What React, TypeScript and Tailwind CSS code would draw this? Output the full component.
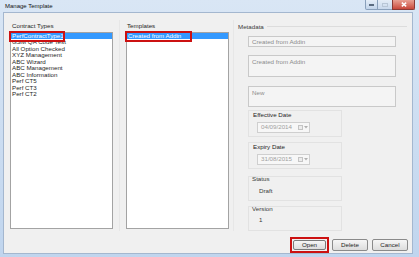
import React from 'react';

const contractTypes = [
  'PerfContractType1',
  'GSM QA Code Test',
  'All Option Checked',
  'XYZ Management',
  'ABC Wizard',
  'ABC Management',
  'ABC Information',
  'Perf CT5',
  'Perf CT3',
  'Perf CT2',
];

function DatePicker({ value }: { value: string }) {
  return (
    <div className="flex items-center h-[11px] w-[53px] border border-[#cfcfcf] bg-[#f7f7f7] pl-[3px]">
      <span className="text-[#a0a0a0] leading-none">{value}</span>
      <span className="ml-auto mr-[1px] flex items-center gap-[1px]">
        <span className="block w-[5px] h-[5px] border border-[#c4c4c4] bg-[#ececec]" />
        <svg width="4" height="3" viewBox="0 0 4 3">
          <path d="M0 0 L4 0 L2 2.5 Z" fill="#b0b0b0" />
        </svg>
      </span>
    </div>
  );
}

export default function App() {
  return (
    <div
      className="w-[419px] h-[257px] flex flex-col bg-gradient-to-b from-[#d9e6f5] to-[#c0d5ee] text-[6.2px] text-[#1e1e1e] overflow-hidden"
      style={{ fontFamily: '"Liberation Sans", Arial, sans-serif' }}
    >
      {/* Title bar */}
      <div className="relative h-[12px] flex items-center pl-[5px] shrink-0">
        <span className="text-[6px] text-[#111] leading-none">Manage Template</span>
        <div className="absolute right-[4px] top-0 flex h-[10px]">
          <div className="w-[13px] h-full border border-[#8aa0bb] border-t-0 rounded-bl-[2px] bg-gradient-to-b from-[#e4edf7] to-[#c2d4ea] flex items-center justify-center">
            <span className="block w-[5px] h-[2px] bg-white border border-[#5a6b80]" />
          </div>
          <div className="w-[14px] h-full border-b border-[#8aa0bb] bg-gradient-to-b from-[#e4edf7] to-[#c8d8ec] flex items-center justify-center">
            <span className="block w-[6px] h-[4px] border border-[#b8c6d6]" />
          </div>
          <div className="w-[23px] h-full border border-[#8a3a34] border-t-0 rounded-br-[2px] bg-gradient-to-b from-[#e8a093] to-[#c8473b] flex items-center justify-center">
            <svg width="6" height="5" viewBox="0 0 6 5">
              <path d="M0.8 0.6 L5.2 4.4 M5.2 0.6 L0.8 4.4" stroke="#ffffff" strokeWidth="1.4" />
            </svg>
          </div>
        </div>
      </div>

      {/* Body */}
      <div className="flex flex-1 pl-[3px] pr-[6px] pb-[5px]">
        <div className="flex-1 flex flex-col bg-[#f0f0f0] border border-[#a4b7cf]">
          <div className="flex h-[211px] mt-[7px] pl-[6px]">
            {/* Contract Types */}
            <div className="flex flex-col w-[103px]">
              <div className="h-[12px] leading-[11px] pl-[2px]">Contract Types</div>
              <div className="relative h-[197px] border border-[#a3a3a3] bg-white">
                {contractTypes.map((t, i) => (
                  <div
                    key={t}
                    className={
                      i === 0
                        ? 'h-[6.45px] leading-[6.45px] pl-[1px] bg-[#3399ff] text-white'
                        : 'h-[6.45px] leading-[6.45px] pl-[1px]'
                    }
                  >
                    {t}
                  </div>
                ))}
                <div className="absolute left-[-2px] top-[-2px] w-[56px] h-[11px] border-2 border-[#cc1111]" />
              </div>
            </div>

            <div className="w-[13px] flex justify-center">
              <div className="w-px h-full bg-[#e7e7e7]" />
            </div>

            {/* Templates */}
            <div className="flex flex-col w-[103px]">
              <div className="h-[12px] leading-[11px] pl-[1px]">Templates</div>
              <div className="relative h-[197px] border border-[#a3a3a3] bg-white">
                <div className="h-[6.45px] leading-[6.45px] pl-[1px] bg-[#3399ff] text-white">Created from Addin</div>
                <div className="absolute left-[-2px] top-[-2px] w-[67px] h-[11px] border-2 border-[#cc1111]" />
              </div>
            </div>

            <div className="w-[9px] flex justify-center">
              <div className="w-px h-full bg-[#e7e7e7]" />
            </div>

            {/* Metadata */}
            <div className="flex flex-col flex-1 pr-[5px]">
              <div className="h-[12px] flex items-center">
                <span className="leading-[11px] text-[#3a3a3a]">Metadata</span>
                <div className="flex-1 h-px bg-[#dcdcdc] ml-[3px]" />
              </div>
              <div className="flex flex-col pl-[10px] w-[158px] text-[#8c8c8c]">
                <div className="mt-[4px] h-[11px] border border-[#c9c9c9] bg-[#f4f4f4] pl-[3px] leading-[9px]">Created from Addin</div>
                <div className="mt-[8px] h-[22px] border border-[#c9c9c9] bg-[#f4f4f4] pl-[3px] pt-[2px] leading-[7px]">Created from Addin</div>
                <div className="mt-[9px] h-[21px] border border-[#c9c9c9] bg-[#f4f4f4] pl-[3px] pt-[2px] leading-[7px]">New</div>

                <div className="mt-[3px] h-[27px] w-[94px] border border-[#e2e2e2] flex flex-col text-[#1e1e1e]">
                  <div className="pl-[4px] pt-[1px] leading-[6px]">Effective Date</div>
                  <div className="pl-[8px] mt-[4px]"><DatePicker value="04/09/2014" /></div>
                </div>
                <div className="mt-[5px] h-[27px] w-[94px] border border-[#e2e2e2] flex flex-col text-[#1e1e1e]">
                  <div className="pl-[4px] pt-[1px] leading-[6px]">Expiry Date</div>
                  <div className="pl-[8px] mt-[4px]"><DatePicker value="31/08/2015" /></div>
                </div>
                <div className="mt-[7px] h-[25px] w-[94px] border border-[#e2e2e2] flex flex-col text-[#3a3a3a]">
                  <div className="pl-[3px] leading-[5px] -mt-[1px]">Status</div>
                  <div className="pl-[10px] mt-[6px] leading-[7px]">Draft</div>
                </div>
                <div className="mt-[5px] h-[25px] w-[94px] border border-[#e2e2e2] flex flex-col text-[#3a3a3a]">
                  <div className="pl-[3px] leading-[5px] -mt-[1px]">Version</div>
                  <div className="pl-[10px] mt-[5px] leading-[7px]">1</div>
                </div>
              </div>
            </div>
          </div>

          {/* Buttons */}
          <div className="flex justify-end items-center gap-[4px] pr-[4px] mt-[6px]">
            <div className="p-[1px] border-2 border-[#cc1111] -mr-[1px]">
              <button className="w-[33px] h-[10px] border border-[#7a7a7a] rounded-[2px] bg-gradient-to-b from-[#f6f6f6] to-[#dddddd] leading-none text-[6.2px]">Open</button>
            </div>
            <button className="w-[36px] h-[12px] border border-[#8a8a8a] rounded-[2px] bg-gradient-to-b from-[#f6f6f6] to-[#dddddd] leading-none text-[6.2px]">Delete</button>
            <button className="w-[36px] h-[12px] border border-[#8a8a8a] rounded-[2px] bg-gradient-to-b from-[#f6f6f6] to-[#dddddd] leading-none text-[6.2px]">Cancel</button>
          </div>
        </div>
      </div>
    </div>
  );
}
